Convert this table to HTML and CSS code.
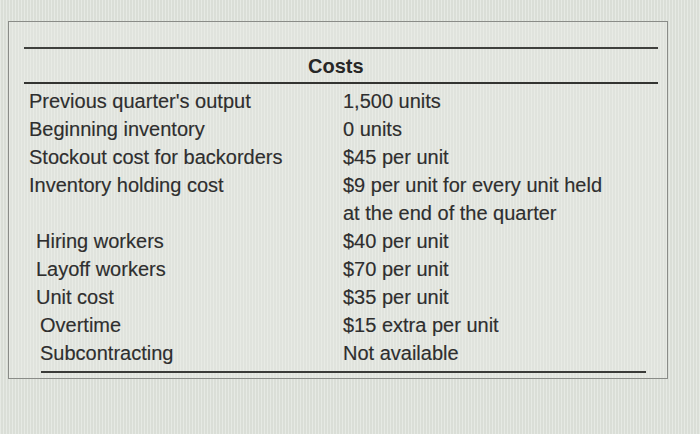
FILE: index.html
```html
<!DOCTYPE html>
<html>
<head>
<meta charset="utf-8">
<link rel="stylesheet" href="styles.css">
</head>
<body>
<div class="frame">
  <div class="sheet">
    <div class="rule-thin"></div>
    <div class="head-row">
      <div class="head-label"></div>
      <div class="head-costs">Costs</div>
    </div>
    <div class="rule-thick"></div>
    <div class="rows">
      <div class="label">Previous quarter's output</div><div class="value">1,500 units</div>
      <div class="label">Beginning inventory</div><div class="value">0 units</div>
      <div class="label">Stockout cost for backorders</div><div class="value">$45 per unit</div>
      <div class="label">Inventory holding cost</div><div class="value">$9 per unit for every unit held<br>at the end of the quarter</div>
      <div class="label ind">Hiring workers</div><div class="value">$40 per unit</div>
      <div class="label ind">Layoff workers</div><div class="value">$70 per unit</div>
      <div class="label ind">Unit cost</div><div class="value">$35 per unit</div>
      <div class="label ind2">Overtime</div><div class="value">$15 extra per unit</div>
      <div class="label ind2">Subcontracting</div><div class="value">Not available</div>
    </div>
    <div class="rule-bottom"></div>
  </div>
</div>
</body>
</html>
```
FILE: styles.css
```css
html, body {
  margin: 0;
  padding: 0;
}
body {
  width: 700px;
  height: 434px;
  overflow: hidden;
  background-color: #e1e5de;
  background-image: repeating-linear-gradient(90deg, rgba(255,255,255,0.18) 0px, rgba(255,255,255,0.18) 1px, rgba(0,0,0,0.03) 1px, rgba(0,0,0,0.03) 3px);
  font-family: "Liberation Sans", Arial, sans-serif;
  color: #2e2e2e;
}
.frame {
  margin: 21px 0 0 8px;
  width: 660px;
  height: 358px;
  border: 1px solid #8a8c88;
  box-sizing: border-box;
  padding: 25px 0 0 15px;
  background: rgba(235, 238, 232, 0.35);
}
.sheet {
  width: 634px;
}
.rule-thin {
  height: 1.5px;
  background: #3f403d;
}
.head-row {
  display: grid;
  grid-template-columns: 284px 1fr;
  height: 33px;
  align-items: center;
}
.head-costs {
  font-weight: bold;
  font-size: 20px;
  color: #272727;
  padding-top: 2px;
}
.rule-thick {
  height: 2.5px;
  background: #333431;
}
.rows {
  display: grid;
  grid-template-columns: 318px 1fr;
  padding: 3px 0 4px;
  font-size: 20px;
  line-height: 28px;
  -webkit-text-stroke: 0.15px #2e2e2e;
}
.label {
  padding-left: 5px;
}
.label.ind {
  padding-left: 12px;
}
.label.ind2 {
  padding-left: 16px;
}
.value {
  padding-left: 1px;
}
.rule-bottom {
  height: 1.5px;
  background: #3a3b38;
  margin-left: 17px;
  width: 605px;
}
```
